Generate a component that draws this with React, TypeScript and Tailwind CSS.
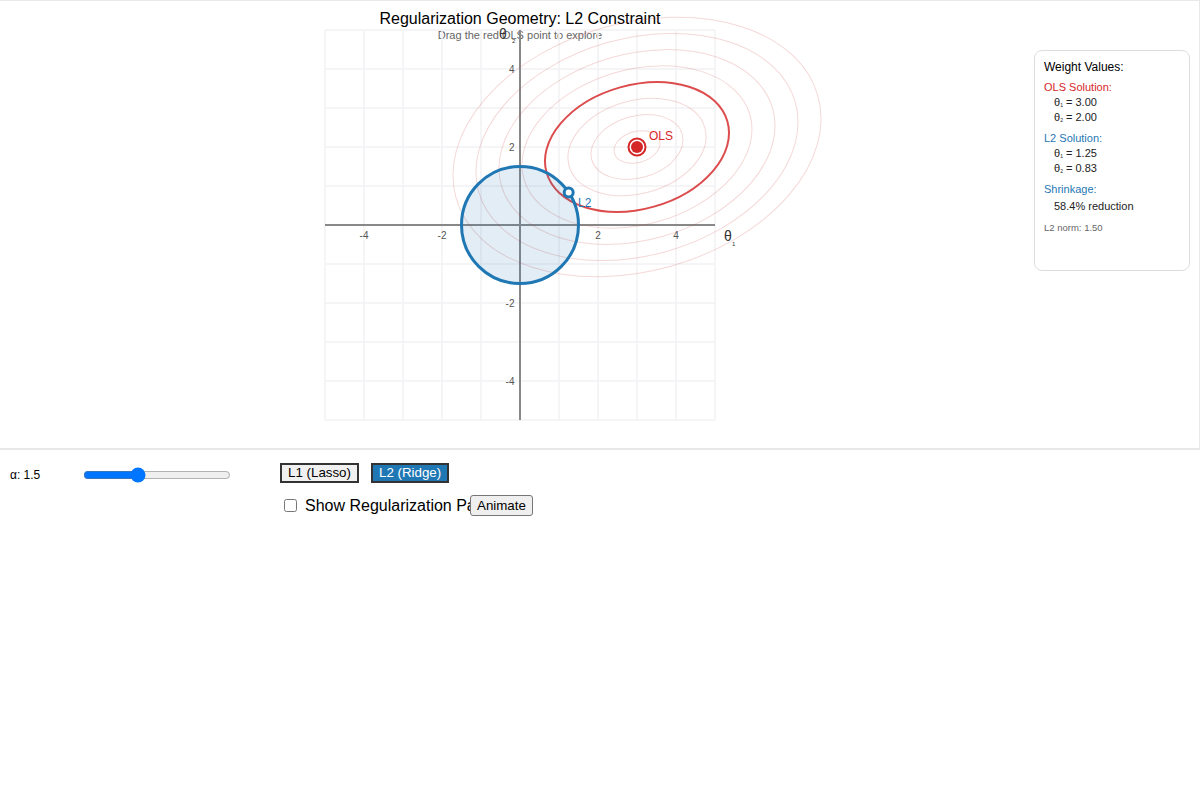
import { useState } from 'react';

const RED = '#d62728';
const BLUE = '#1f77b4';

// plot geometry, in page pixels
const ORIGIN_X = 520;
const ORIGIN_Y = 225;
const UNIT = 39;
const RINGS = [1, 2, 3, 4, 5, 6, 7, 8];

const px = (v: number) => ORIGIN_X + v * UNIT;
const py = (v: number) => ORIGIN_Y - v * UNIT;

function Chart({ alpha }: { alpha: number }) {
  const ols = { x: 3, y: 2 };
  const norm = Math.sqrt(ols.x * ols.x + ols.y * ols.y);
  const l2 = { x: (ols.x * alpha) / norm, y: (ols.y * alpha) / norm };
  const cx = px(ols.x);
  const cy = py(ols.y);
  const grid = Array.from({ length: 11 }, (_, i) => i - 5);

  return (
    <svg
      className="ml-[270px] shrink-0 overflow-visible"
      width={560}
      height={440}
      viewBox="270 1 560 440"
    >
      <text x={520} y={24} textAnchor="middle" fontSize={16} fill="#000">
        Regularization Geometry: L2 Constraint
      </text>
      <text x={520} y={39} textAnchor="middle" fontSize={11} fill="#666">
        Drag the red OLS point to explore
      </text>

      {/* grid */}
      {grid.map((g) => (
        <g key={g}>
          <line x1={px(g)} y1={py(5)} x2={px(g)} y2={py(-5)} stroke="#f2f2f4" strokeWidth={1.5} />
          <line x1={px(-5)} y1={py(g)} x2={px(5)} y2={py(g)} stroke="#f2f2f4" strokeWidth={1.5} />
        </g>
      ))}

      {/* axes */}
      <line x1={px(-5)} y1={ORIGIN_Y} x2={px(5)} y2={ORIGIN_Y} stroke="#888" strokeWidth={2} />
      <line x1={ORIGIN_X} y1={py(5)} x2={ORIGIN_X} y2={py(-5)} stroke="#888" strokeWidth={2} />

      {[-4, -2, 2, 4].map((t) => (
        <g key={t} fontSize={10} fill="#555">
          <text x={px(t)} y={ORIGIN_Y + 13.5} textAnchor="middle">{t}</text>
          <text x={ORIGIN_X - 5.5} y={py(t) + 3.5} textAnchor="end">{t}</text>
        </g>
      ))}

      <text x={724} y={241} fontSize={14} fill="#333">θ</text>
      <text x={732} y={246} fontSize={6} fill="#333">1</text>
      <text x={499} y={39} fontSize={14} fill="#333">θ</text>
      <text x={512} y={43} fontSize={6} fill="#333">2</text>

      {/* loss contours */}
      {RINGS.map((s) => (
        <ellipse
          key={s}
          cx={cx}
          cy={cy}
          rx={23.5 * s}
          ry={15.5 * s}
          transform={`rotate(-15.8 ${cx} ${cy})`}
          fill="none"
          stroke="rgba(205,60,60,0.2)"
          strokeWidth={1}
        />
      ))}
      <ellipse
        cx={cx}
        cy={cy}
        rx={94}
        ry={62}
        transform={`rotate(-15.8 ${cx} ${cy})`}
        fill="none"
        stroke={RED}
        strokeOpacity={0.8}
        strokeWidth={2}
      />

      {/* constraint region */}
      <circle
        cx={ORIGIN_X}
        cy={ORIGIN_Y}
        r={alpha * UNIT}
        fill="rgba(31,119,180,0.13)"
        stroke={BLUE}
        strokeWidth={3}
      />

      <circle cx={px(l2.x)} cy={py(l2.y)} r={4.5} fill="#fff" stroke={BLUE} strokeWidth={3} />
      <text x={578} y={207} fontSize={12} fill={BLUE}>L2</text>

      <circle cx={cx} cy={cy} r={8.5} fill="#fff" stroke={RED} strokeWidth={2} />
      <circle cx={cx} cy={cy} r={6} fill={RED} />
      <text x={649} y={140} fontSize={12} fill={RED}>OLS</text>
    </svg>
  );
}

function Theta({ i, value }: { i: number; value: string }) {
  return (
    <div className="pl-[10px] text-[11px] leading-[15px] text-[#222]">
      θ<sub className="text-[5px]">{i}</sub> = {value}
    </div>
  );
}

export default function App() {
  const [alpha, setAlpha] = useState(1.5);
  const [mode, setMode] = useState<'L1' | 'L2'>('L2');
  const [showPath, setShowPath] = useState(false);

  const norm = Math.sqrt(13);
  const w1 = (3 * alpha) / norm;
  const w2 = (2 * alpha) / norm;

  return (
    <div className="w-[1200px] min-h-[800px] bg-white font-['Liberation_Sans',Arial,sans-serif] text-black">
      <div className="flex h-[450px] border-t border-r border-b-2 border-[#e8e8e8]">
        <Chart alpha={alpha} />

        {/* weight values card */}
        <div className="ml-auto mr-[9px] mt-[49px] h-[221px] w-[156px] shrink-0 self-start rounded-lg border border-[#ddd] bg-white pl-[9px] pt-[8px]">
          <div className="text-[12px] leading-[16px]">Weight Values:</div>
          <div className="mt-[5px] text-[11px] leading-[15px] text-[#d62728]">OLS Solution:</div>
          <Theta i={1} value="3.00" />
          <Theta i={2} value="2.00" />
          <div className="mt-[6px] text-[11px] leading-[15px] text-[#1f77b4]">L2 Solution:</div>
          <Theta i={1} value={w1.toFixed(2)} />
          <Theta i={2} value={w2.toFixed(2)} />
          <div className="mt-[6px] text-[11px] leading-[15px] text-[#1f77b4]">Shrinkage:</div>
          <div className="mt-[2px] pl-[10px] text-[11px] leading-[15px] text-[#222]">
            {((1 - alpha / norm) * 100).toFixed(1)}% reduction
          </div>
          <div className="mt-[7px] text-[9.5px] leading-[13px] text-[#666]">
            L2 norm: {alpha.toFixed(2)}
          </div>
        </div>
      </div>

      {/* controls */}
      <div className="flex pt-[13px]">
        <div className="flex h-[24px] w-[280px] items-center pl-[10px]">
          <span className="w-[73px] text-[12px]">α: {alpha}</span>
          <input
            type="range"
            min={0.1}
            max={4}
            step={0.1}
            value={alpha}
            onChange={(e) => setAlpha(Number(e.target.value))}
            className="w-[148px]"
          />
        </div>

        <div className="flex flex-col gap-[12px]">
          <div className="flex gap-[12px]">
            <button
              onClick={() => setMode('L1')}
              className={
                mode === 'L1'
                  ? 'h-[20px] border-2 border-[#333] bg-[#1f77b4] px-[6px] text-[13.33px] leading-[16px] text-white'
                  : 'h-[20px] border-2 border-[#333] bg-[#f0f0f0] px-[6px] text-[13.33px] leading-[16px] text-black'
              }
            >
              L1 (Lasso)
            </button>
            <button
              onClick={() => setMode('L2')}
              className={
                mode === 'L2'
                  ? 'h-[20px] border-2 border-[#333] bg-[#1f77b4] px-[6px] text-[13.33px] leading-[16px] text-white'
                  : 'h-[20px] border-2 border-[#333] bg-[#f0f0f0] px-[6px] text-[13.33px] leading-[16px] text-black'
              }
            >
              L2 (Ridge)
            </button>
          </div>

          <div className="flex h-[21px] items-center">
            <label className="flex w-[190px] items-center overflow-hidden whitespace-nowrap">
              <input
                type="checkbox"
                checked={showPath}
                onChange={(e) => setShowPath(e.target.checked)}
                className="ml-[4px] h-[13px] w-[13px] shrink-0"
              />
              <span className="ml-[8px] text-[16px]">Show Regularization Path</span>
            </label>
            <button className="h-[21px] rounded-[3px] border border-[#767676] bg-[#efefef] px-[6px] text-[13.33px] leading-[15px]">
              Animate
            </button>
          </div>
        </div>
      </div>
    </div>
  );
}
